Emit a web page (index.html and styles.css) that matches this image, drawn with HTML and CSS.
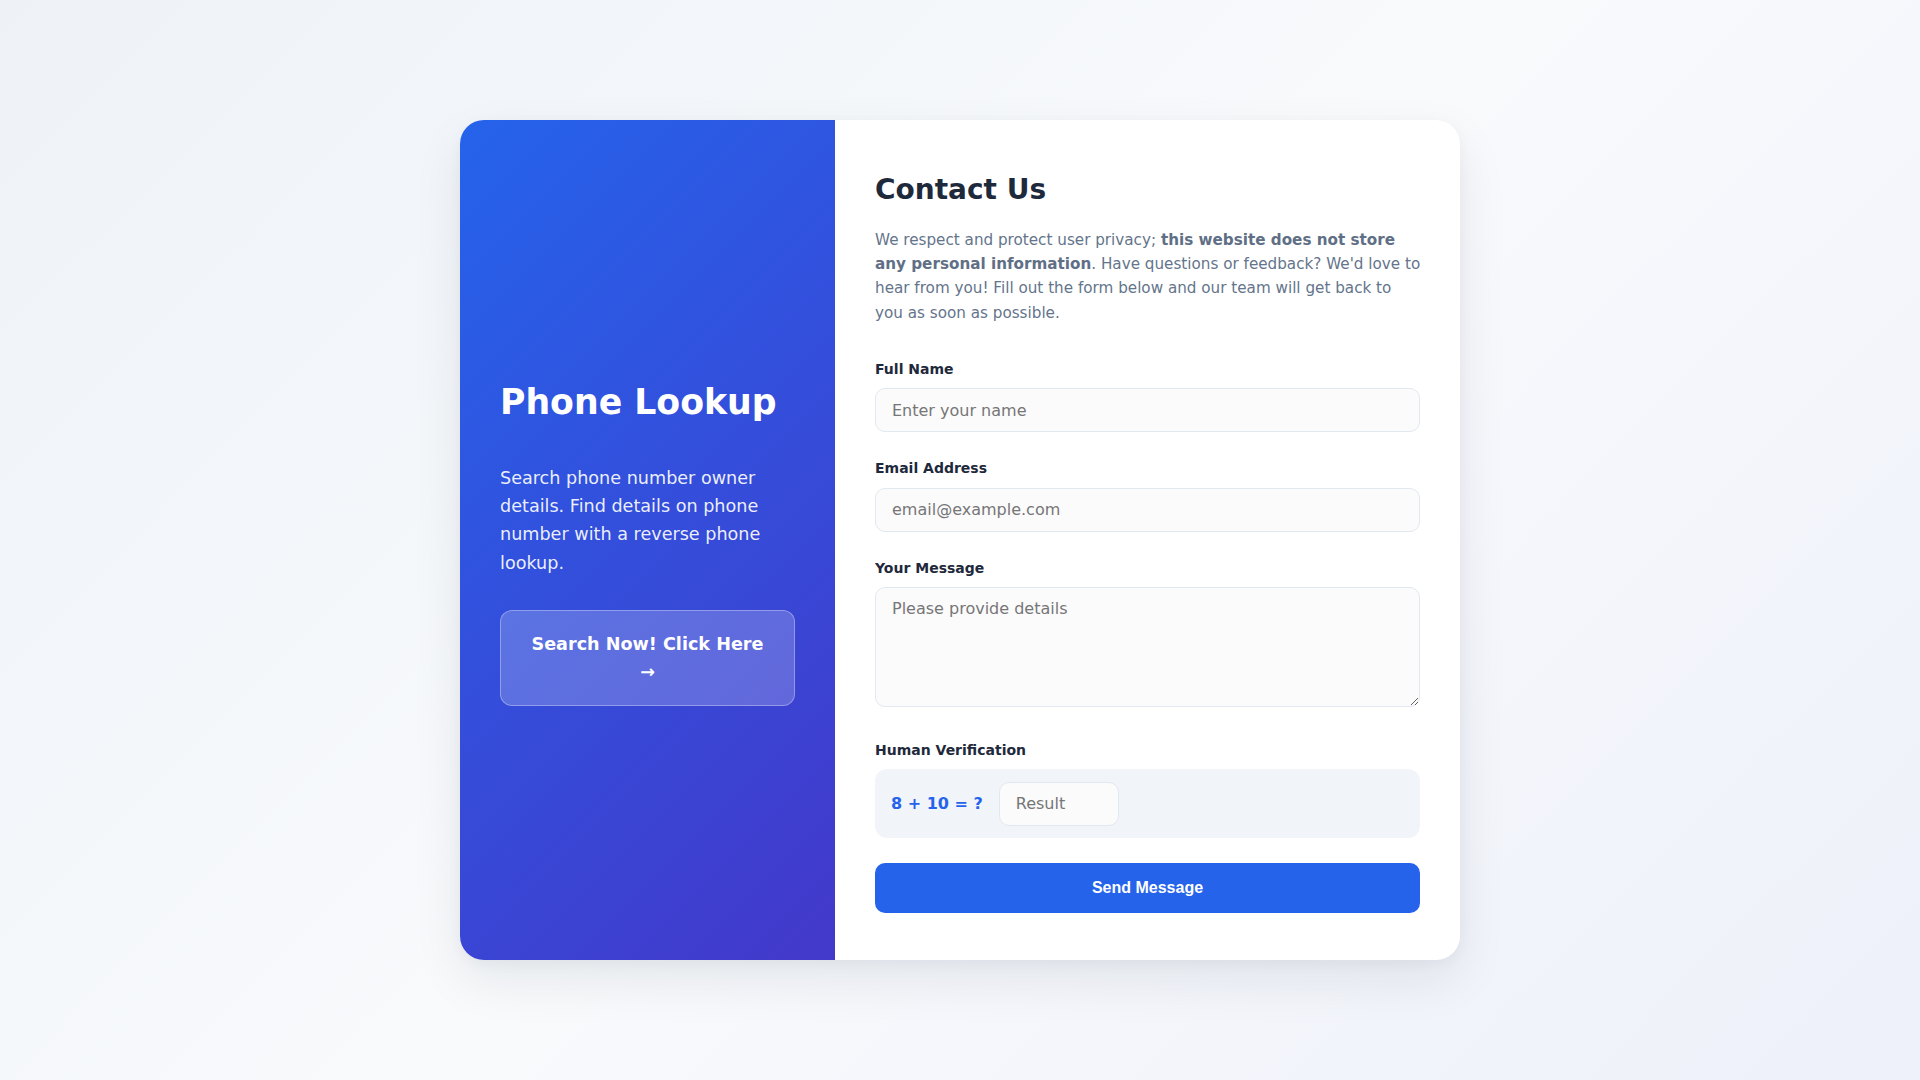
FILE: index.html
```html
<!DOCTYPE html>
<html lang="en">
<head>
<meta charset="utf-8">
<title>Contact Us - Phone Lookup</title>
<link rel="stylesheet" href="styles.css">
</head>
<body>
<main class="card">
  <section class="promo">
    <h1 class="promo-title">Phone Lookup</h1>
    <p class="promo-text">Search phone number owner details. Find details on phone number with a reverse phone lookup.</p>
    <a class="promo-btn" href="#">Search Now! Click Here →</a>
  </section>
  <section class="contact">
    <h2 class="contact-title">Contact Us</h2>
    <p class="contact-intro">We respect and protect user privacy; <strong>this website does not store any personal information</strong>. Have questions or feedback? We'd love to hear from you! Fill out the form below and our team will get back to you as soon as possible.</p>
    <form class="form">
      <div class="group">
        <label class="label" for="name">Full Name</label>
        <input class="field" id="name" type="text" placeholder="Enter your name">
      </div>
      <div class="group">
        <label class="label" for="email">Email Address</label>
        <input class="field" id="email" type="email" placeholder="email@example.com">
      </div>
      <div class="group group-message">
        <label class="label" for="msg">Your Message</label>
        <textarea class="field area" id="msg" placeholder="Please provide details"></textarea>
      </div>
      <div class="group group-captcha">
        <label class="label" for="captcha">Human Verification</label>
        <div class="captcha">
          <span class="captcha-q">8 + 10 = ?</span>
          <input class="field captcha-input" id="captcha" type="text" placeholder="Result">
        </div>
      </div>
      <button class="send" type="button">Send Message</button>
    </form>
  </section>
</main>
</body>
</html>
```
FILE: styles.css
```css
* { box-sizing: border-box; }
html, body { margin: 0; padding: 0; }
body {
  min-height: 100vh;
  display: flex;
  align-items: center;
  justify-content: center;
  font-family: "DejaVu Sans", sans-serif;
  line-height: 1.6;
  background: linear-gradient(135deg, #eef2f7 0%, #f8fafc 50%, #eef0fa 100%);
}
.card {
  width: 1000px;
  min-height: 840px;
  display: grid;
  grid-template-columns: 375px 1fr;
  background: #ffffff;
  border-radius: 24px;
  overflow: hidden;
  box-shadow: 0 20px 50px rgba(15, 23, 42, 0.08), 0 4px 14px rgba(15, 23, 42, 0.04);
}
.promo {
  background: linear-gradient(135deg, #2563eb 0%, #4338ca 100%);
  color: #ffffff;
  padding: 44px 40px 36px;
  display: flex;
  flex-direction: column;
  justify-content: center;
}
.promo-title {
  margin: 0 0 41px;
  font-size: 34.7px;
  line-height: 1.2;
  font-weight: 700;
}
.promo-text {
  margin: 0 0 33px;
  font-size: 17.6px;
  line-height: 1.6;
  color: rgba(255, 255, 255, 0.92);
}
.promo-btn {
  display: block;
  text-align: center;
  text-decoration: none;
  color: #ffffff;
  font-weight: 700;
  font-size: 17.6px;
  line-height: 1.6;
  padding: 19.2px 24px;
  background: rgba(255, 255, 255, 0.2);
  border: 1px solid rgba(255, 255, 255, 0.32);
  border-radius: 12px;
}
.contact {
  padding: 48px 40px 44.5px;
}
.contact-title {
  margin: 0 0 15px;
  font-size: 28px;
  line-height: 1.6;
  font-weight: 700;
  color: #1e293b;
}
.contact-intro {
  margin: 0 -2.5px 33px 0;
  font-size: 15.2px;
  line-height: 1.6;
  color: #64748b;
}
.contact-intro strong { font-weight: 700; color: #5f6f86; }
.form { display: flex; flex-direction: column; }
.group { margin-bottom: 25px; }
.group-message { margin-bottom: 31.5px; }
.group-captcha { margin-bottom: 25px; }
.label {
  display: block;
  margin-bottom: 8px;
  font-size: 14px;
  line-height: 22.4px;
  font-weight: 700;
  color: #1e293b;
}
.field {
  display: block;
  width: 100%;
  height: 44px;
  padding: 12px 16px;
  font-family: "DejaVu Sans", sans-serif;
  font-size: 16px;
  line-height: 18px;
  color: #1e293b;
  background: #fbfbfc;
  border: 1px solid #e2e8f0;
  border-radius: 10px;
  outline: none;
}
.field::placeholder { color: #767676; }
.area { height: 120px; resize: vertical; }
.captcha {
  display: flex;
  align-items: center;
  gap: 16px;
  padding: 12.5px 16px;
  background: #f1f5f9;
  border-radius: 12px;
}
.captcha-q {
  font-size: 16px;
  font-weight: 700;
  color: #2563eb;
  white-space: nowrap;
}
.captcha-input { width: 120px; }
.send {
  display: block;
  width: 100%;
  height: 49.5px;
  border: 0;
  border-radius: 10px;
  background: #2563eb;
  color: #ffffff;
  font-family: "Liberation Sans", Arial, sans-serif;
  font-size: 16px;
  font-weight: 700;
  cursor: pointer;
}
```
